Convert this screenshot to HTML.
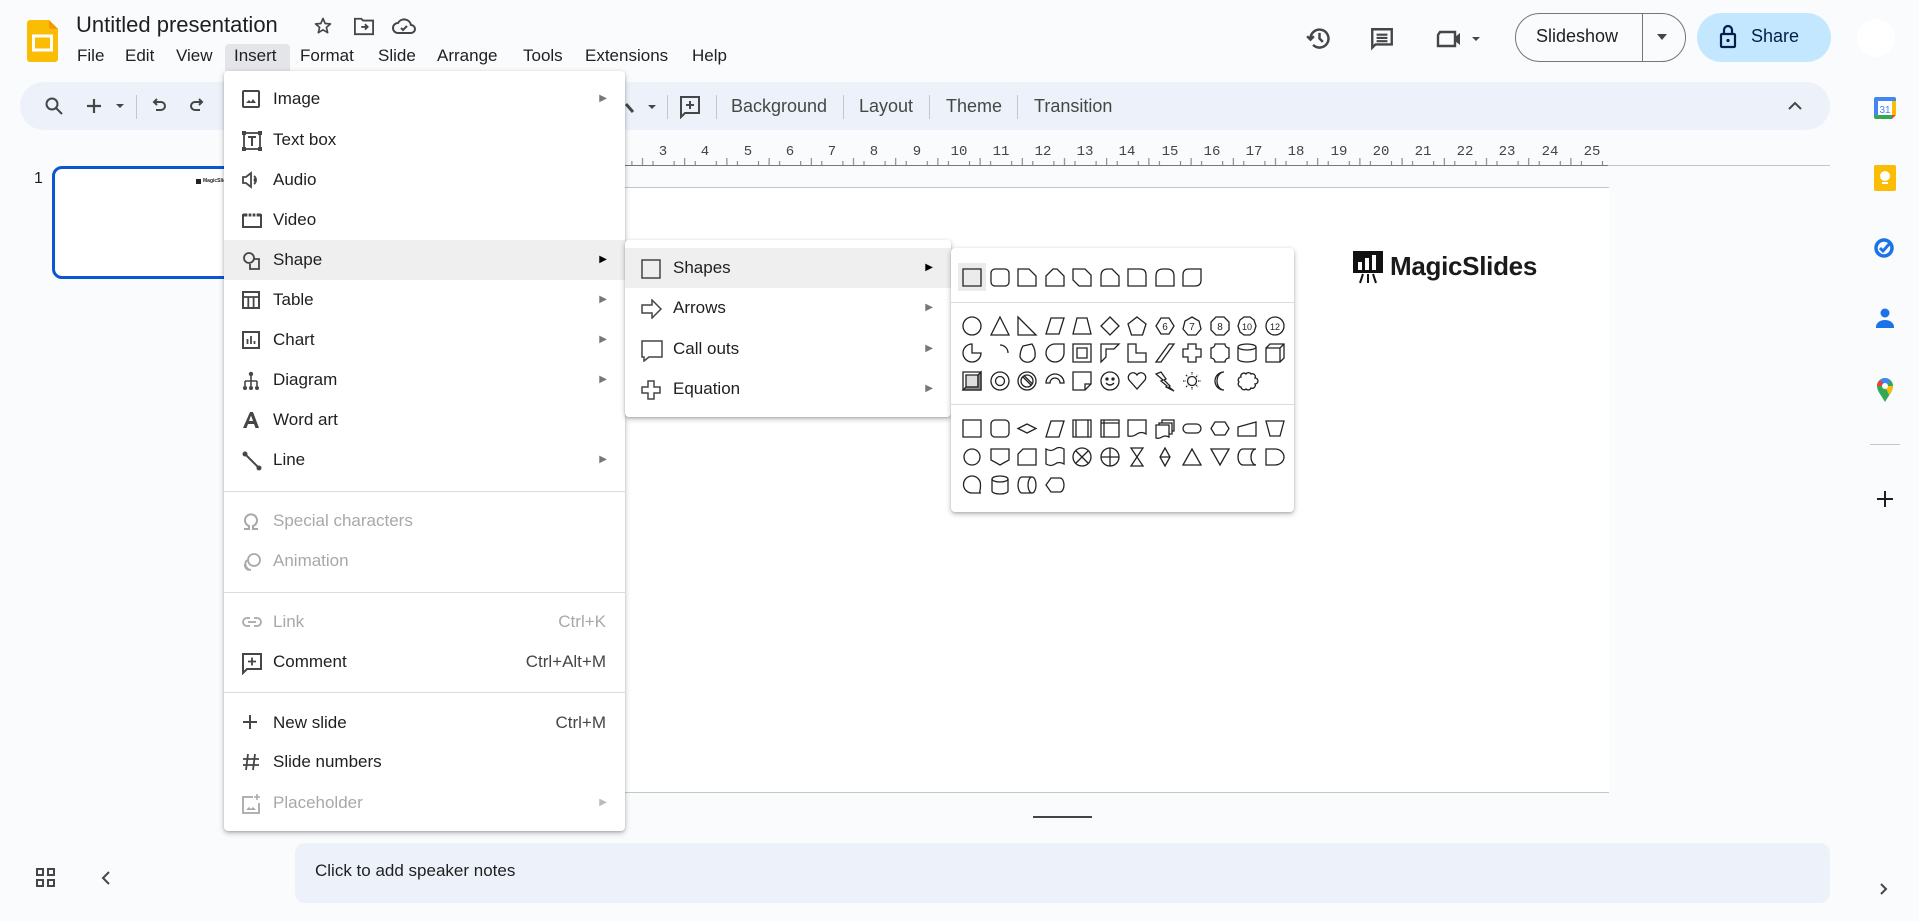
<!DOCTYPE html>
<html><head><meta charset="utf-8">
<style>
*{margin:0;padding:0;box-sizing:border-box}
body{width:1919px;height:921px;overflow:hidden;background:#f9fbfd;font-family:"Liberation Sans",Arial,sans-serif;color:#1f1f1f;position:relative}
.a{position:absolute}
.mb{position:absolute;top:46px;font-size:17px;color:#1f1f1f}
.tb{position:absolute;top:96px;font-size:18px;color:#444746}
.sep{position:absolute;top:95px;width:1px;height:24px;background:#c7c7c7}
.menu{position:absolute;background:#fff;border-radius:4px;box-shadow:0 2px 6px rgba(0,0,0,.25),0 1px 2px rgba(0,0,0,.15)}
.it{position:absolute;left:0;right:0;height:40px;font-size:17px;line-height:40px;color:#1f1f1f}
.it .t{position:absolute;left:49px}
.it svg{position:absolute;left:18px;top:11px}
.it .ar{position:absolute;right:18px;top:0;font-size:10px;color:#777}
.it .sc{position:absolute;right:19px;color:#444746}
.dis{color:#a8a8a8!important}
.dis .sc{color:#a8a8a8}
.hr{position:absolute;left:0;right:0;height:1px;background:#dadce0}
.rn{position:absolute;top:144px;font-size:14px;color:#444;font-family:"Liberation Mono",monospace;transform:translateX(-50%)}
</style></head><body>

<!-- logo -->
<svg class="a" style="left:27px;top:20px" width="31" height="42" viewBox="0 0 31 42"><path d="M3 0h19l9 9v30a3 3 0 0 1-3 3H3a3 3 0 0 1-3-3V3a3 3 0 0 1 3-3z" fill="#fbbc04"/><path d="M22 0l9 9h-7a2 2 0 0 1-2-2z" fill="#f29900"/><rect x="6.5" y="16" width="18" height="14" fill="none" stroke="#fff" stroke-width="3"/></svg>
<div class="a" style="left:76px;top:12px;font-size:22px;color:#1f1f1f">Untitled presentation</div>
<svg class="a" style="left:313px;top:16px" width="20" height="20" viewBox="0 0 24 24"><path d="M12 3l2.6 6 6.4.5-4.9 4.2 1.5 6.3L12 16.6 6.4 20l1.5-6.3L3 9.5 9.4 9z" fill="none" stroke="#444746" stroke-width="2" stroke-linejoin="round"/></svg>
<svg class="a" style="left:353px;top:16px" width="22" height="20" viewBox="0 0 24 22"><path d="M2 3h7l2 2h11v15H2z" fill="none" stroke="#444746" stroke-width="2"/><path d="M9 12h7M13 9l3 3-3 3" fill="none" stroke="#444746" stroke-width="2"/></svg>
<svg class="a" style="left:392px;top:16px" width="24" height="20" viewBox="0 0 24 20"><path d="M6 17a5 5 0 0 1 0-10 7 7 0 0 1 13 2 4 4 0 0 1 0 8z" fill="none" stroke="#444746" stroke-width="2"/><path d="M9 12l2 2 4-4" fill="none" stroke="#444746" stroke-width="2"/></svg>

<div class="a" style="left:225px;top:44px;width:65px;height:27px;background:#e3e5e8;border-radius:4px 4px 0 0"></div>
<div class="mb" style="left:77px">File</div><div class="mb" style="left:125px">Edit</div><div class="mb" style="left:176px">View</div><div class="mb" style="left:234px">Insert</div><div class="mb" style="left:300px">Format</div><div class="mb" style="left:378px">Slide</div><div class="mb" style="left:437px">Arrange</div><div class="mb" style="left:523px">Tools</div><div class="mb" style="left:585px">Extensions</div><div class="mb" style="left:692px">Help</div>

<!-- top right -->
<svg class="a" style="left:1306px;top:25px" width="27" height="27" viewBox="0 0 24 24"><path d="M4 12a8 8 0 1 1 2.3 5.7" fill="none" stroke="#444746" stroke-width="2.2"/><path d="M1 10l3 3 3-3" fill="none" stroke="#444746" stroke-width="2.2"/><path d="M12 7v5l3 3" fill="none" stroke="#444746" stroke-width="2.2"/></svg>
<svg class="a" style="left:1369px;top:26px" width="26" height="26" viewBox="0 0 24 24"><path d="M3 3h18v14H6l-3 3z" fill="none" stroke="#444746" stroke-width="2.2"/><path d="M7 8h10M7 11h10M7 14h10" stroke="#444746" stroke-width="2"/></svg>
<svg class="a" style="left:1436px;top:27px" width="46" height="24" viewBox="0 0 46 24"><path d="M4 5h15v14H2V8z" fill="none" stroke="#444746" stroke-width="2.4"/><path d="M19 10l5-4v12l-5-4z" fill="#444746"/><path d="M36 10h8l-4 4z" fill="#444746"/></svg>
<div class="a" style="left:1515px;top:13px;width:171px;height:49px;border:1px solid #747775;border-radius:25px"></div>
<div class="a" style="left:1642px;top:13px;width:1px;height:49px;background:#747775"></div>
<div class="a" style="left:1536px;top:26px;font-size:18px;color:#1f1f1f">Slideshow</div>
<svg class="a" style="left:1656px;top:33px" width="12" height="8"><path d="M1 1h10L6 7z" fill="#444746"/></svg>
<div class="a" style="left:1697px;top:13px;width:134px;height:49px;background:#c2e7ff;border-radius:25px"></div>
<svg class="a" style="left:1719px;top:24px" width="18" height="25" viewBox="0 0 18 25"><rect x="2" y="10" width="14" height="13" rx="1" fill="none" stroke="#041e49" stroke-width="2.2"/><path d="M5 10V6a4 4 0 0 1 8 0v4" fill="none" stroke="#041e49" stroke-width="2.2"/><circle cx="9" cy="16.5" r="1.6" fill="#041e49"/></svg>
<div class="a" style="left:1751px;top:26px;font-size:18px;color:#041e49">Share</div>
<div class="a" style="left:1857px;top:19px;width:38px;height:38px;border-radius:50%;background:#fff"></div>

<!-- toolbar -->
<div class="a" style="left:20px;top:82px;width:1810px;height:48px;background:#edf2fa;border-radius:24px"></div>
<svg class="a" style="left:44px;top:96px" width="20" height="20" viewBox="0 0 20 20"><circle cx="8" cy="8" r="5.5" fill="none" stroke="#444746" stroke-width="2"/><path d="M12 12l6 6" stroke="#444746" stroke-width="2"/></svg>
<svg class="a" style="left:86px;top:97px" width="40" height="18" viewBox="0 0 40 18"><path d="M8 2v14M1 9h14" stroke="#444746" stroke-width="2.2"/><path d="M30 7h8l-4 4z" fill="#444746"/></svg>
<div class="sep" style="left:136px"></div>
<svg class="a" style="left:150px;top:97px" width="18" height="18" viewBox="0 0 18 18"><path d="M5 5h6a4 4 0 0 1 0 8H6" fill="none" stroke="#444746" stroke-width="2"/><path d="M7 2L4 5l3 3" fill="none" stroke="#444746" stroke-width="2"/></svg>
<svg class="a" style="left:188px;top:97px" width="18" height="18" viewBox="0 0 18 18"><path d="M13 5H7a4 4 0 0 0 0 8h5" fill="none" stroke="#444746" stroke-width="2"/><path d="M11 2l3 3-3 3" fill="none" stroke="#444746" stroke-width="2"/></svg>
<svg class="a" style="left:622px;top:98px" width="40" height="18" viewBox="0 0 40 18"><path d="M4 6l7 8" stroke="#444746" stroke-width="3"/><path d="M26 7h8l-4 4z" fill="#444746"/></svg>
<div class="sep" style="left:667px"></div>
<svg class="a" style="left:679px;top:95px" width="22" height="24" viewBox="0 0 22 24"><path d="M2 2h18v16H6l-4 4z" fill="none" stroke="#444746" stroke-width="2"/><path d="M11 6v8M7 10h8" stroke="#444746" stroke-width="2"/></svg>
<div class="sep" style="left:716px"></div>
<div class="tb" style="left:731px">Background</div><div class="sep" style="left:843px"></div>
<div class="tb" style="left:859px">Layout</div><div class="sep" style="left:929px"></div>
<div class="tb" style="left:946px">Theme</div><div class="sep" style="left:1017px"></div>
<div class="tb" style="left:1034px">Transition</div>
<svg class="a" style="left:1787px;top:100px" width="16" height="12"><path d="M2 9l6-6 6 6" fill="none" stroke="#444746" stroke-width="2"/></svg>

<!-- ruler -->
<svg class="a" style="left:0;top:150px" width="1919" height="20">
<defs><pattern id="rp" x="537" y="0" width="42.2" height="20" patternUnits="userSpaceOnUse"><path d="M10.5 11v4M21.1 8v7M31.6 11v4" stroke="#777" stroke-width="1"/></pattern></defs>
<rect x="625" y="0" width="983" height="15" fill="url(#rp)"/>
<path d="M625 15.5H1608" stroke="#777"/><path d="M1608 15.5H1830" stroke="#c4c7c5"/>
</svg>
<div class="rn" style="left:663px">3</div><div class="rn" style="left:705px">4</div><div class="rn" style="left:748px">5</div><div class="rn" style="left:790px">6</div><div class="rn" style="left:832px">7</div><div class="rn" style="left:874px">8</div><div class="rn" style="left:917px">9</div><div class="rn" style="left:959px">10</div><div class="rn" style="left:1001px">11</div><div class="rn" style="left:1043px">12</div><div class="rn" style="left:1085px">13</div><div class="rn" style="left:1127px">14</div><div class="rn" style="left:1170px">15</div><div class="rn" style="left:1212px">16</div><div class="rn" style="left:1254px">17</div><div class="rn" style="left:1296px">18</div><div class="rn" style="left:1339px">19</div><div class="rn" style="left:1381px">20</div><div class="rn" style="left:1423px">21</div><div class="rn" style="left:1465px">22</div><div class="rn" style="left:1507px">23</div><div class="rn" style="left:1550px">24</div><div class="rn" style="left:1592px">25</div>

<!-- slide -->
<div class="a" style="left:532px;top:187px;width:1077px;height:606px;background:#fff;border-top:1px solid #c4c7c5;border-bottom:1px solid #c4c7c5"></div>
<svg class="a" style="left:1352px;top:250px" width="32" height="34" viewBox="0 0 32 34"><rect x="1" y="1" width="30" height="22" fill="#111"/><rect x="6" y="12" width="4" height="8" fill="#fff"/><rect x="13" y="8" width="4" height="12" fill="#fff"/><rect x="20" y="5" width="4" height="15" fill="#fff"/><path d="M11 24l-3 9M16 24v9M21 24l3 9" stroke="#111" stroke-width="2"/></svg>
<div class="a" style="left:1390px;top:251px;font-size:26px;font-weight:bold;color:#1a1a1a;letter-spacing:-0.3px">MagicSlides</div>
<div class="a" style="left:1033px;top:816px;width:59px;height:2px;background:#444"></div>

<!-- thumbnail -->
<div class="a" style="left:34px;top:170px;font-size:16px;color:#1f1f1f">1</div>
<div class="a" style="left:52px;top:166px;width:186px;height:113px;border:3px solid #0b57d0;border-radius:10px;background:#fff"></div>
<div class="a" style="left:196px;top:179px;width:5px;height:5px;background:#222"></div>
<div class="a" style="left:203px;top:178px;font-size:5px;font-weight:bold">MagicSlides</div>

<!-- notes -->
<div class="a" style="left:295px;top:843px;width:1535px;height:60px;background:#edf2fa;border-radius:10px"></div>
<div class="a" style="left:315px;top:861px;font-size:17px;color:#1f1f1f">Click to add speaker notes</div>
<svg class="a" style="left:36px;top:868px" width="19" height="19" viewBox="0 0 19 19"><g fill="none" stroke="#444746" stroke-width="2"><rect x="1" y="1" width="6" height="6"/><rect x="12" y="1" width="6" height="6"/><rect x="1" y="12" width="6" height="6"/><rect x="12" y="12" width="6" height="6"/></g></svg>
<svg class="a" style="left:100px;top:870px" width="12" height="16"><path d="M9 2L3 8l6 6" fill="none" stroke="#444746" stroke-width="2"/></svg>

<!-- right side panel -->
<svg class="a" style="left:1873px;top:96px" width="24" height="24" viewBox="0 0 24 24"><rect x="1" y="1" width="22" height="22" rx="2" fill="#fff"/><path d="M1 3a2 2 0 0 1 2-2h18a2 2 0 0 1 2 2v2H1z" fill="#4285f4"/><path d="M1 19h18v4H3a2 2 0 0 1-2-2z" fill="#34a853"/><path d="M19 5h4v14h-4z" fill="#fbbc04"/><path d="M19 19h4l-4 4z" fill="#ea4335"/><path d="M1 5h4v14H1z" fill="#4285f4"/><text x="12" y="17" font-size="10" text-anchor="middle" fill="#4285f4" font-family="Liberation Sans">31</text></svg>
<svg class="a" style="left:1874px;top:165px" width="22" height="26" viewBox="0 0 22 26"><rect x="0" y="0" width="22" height="26" rx="2" fill="#fbbc04"/><circle cx="11" cy="11" r="5" fill="#fff"/><rect x="8" y="17" width="6" height="2" fill="#fff"/></svg>
<svg class="a" style="left:1873px;top:235px" width="24" height="24" viewBox="0 0 24 24"><circle cx="11" cy="13" r="8" fill="none" stroke="#1a73e8" stroke-width="3.5"/><path d="M7 13l3 3 8-9" fill="none" stroke="#1a73e8" stroke-width="3"/></svg>
<svg class="a" style="left:1876px;top:307px" width="18" height="22" viewBox="0 0 18 22"><circle cx="9" cy="6" r="4.5" fill="#1a73e8"/><path d="M0 20a9 7 0 0 1 18 0v1H0z" fill="#1a73e8"/></svg>
<svg class="a" style="left:1876px;top:377px" width="18" height="26" viewBox="0 0 18 26"><path d="M9 25C5 18 1 14 1 9a8 8 0 0 1 16 0c0 5-4 9-8 16z" fill="#34a853"/><path d="M1 9a8 8 0 0 1 3-6l5 6z" fill="#ea4335"/><path d="M4 3a8 8 0 0 1 11 1L9 9z" fill="#4285f4"/><path d="M17 9c0 3-2 6-4 9L9 9z" fill="#fbbc04"/><circle cx="9" cy="9" r="3" fill="#fff"/></svg>
<div class="a" style="left:1870px;top:444px;width:30px;height:1px;background:#c4c7c5"></div>
<svg class="a" style="left:1877px;top:491px" width="16" height="16"><path d="M8 0v16M0 8h16" stroke="#1f1f1f" stroke-width="2"/></svg>
<svg class="a" style="left:1879px;top:882px" width="10" height="14"><path d="M2 2l5 5-5 5" fill="none" stroke="#444746" stroke-width="2"/></svg>

<!-- Insert menu -->
<div class="menu" style="left:224px;top:71px;width:401px;height:760px">
<div class="a" style="left:0;right:0;top:169px;height:40px;background:#efefef"></div>
<div class="it" style="top:8px"><svg width="18" height="18" viewBox="0 0 18 18"><rect x="1" y="1" width="16" height="16" rx="1" fill="none" stroke="#444746" stroke-width="2"/><path d="M4 13l3-3 2 2 2-3 3 4z" fill="#444746"/></svg><span class="t">Image</span><span class="ar">▶</span></div>
<div class="it" style="top:49px"><svg width="20" height="20" viewBox="0 0 20 20"><rect x="2" y="2" width="16" height="16" fill="none" stroke="#444746" stroke-width="1.8"/><path d="M6 6h8M10 6v9" stroke="#444746" stroke-width="2"/><g fill="#444746"><rect x="0" y="0" width="4" height="4"/><rect x="16" y="0" width="4" height="4"/><rect x="0" y="16" width="4" height="4"/><rect x="16" y="16" width="4" height="4"/></g></svg><span class="t">Text box</span></div>
<div class="it" style="top:89px"><svg width="18" height="18" viewBox="0 0 18 18"><path d="M1 6h3l5-4v14l-5-4H1z" fill="none" stroke="#444746" stroke-width="1.8"/><path d="M12 5a5 5 0 0 1 0 8M12 7.5a2 2 0 0 1 0 3" fill="none" stroke="#444746" stroke-width="1.8"/></svg><span class="t">Audio</span></div>
<div class="it" style="top:129px"><svg width="20" height="18" viewBox="0 0 20 18"><rect x="1" y="4" width="18" height="12" fill="none" stroke="#444746" stroke-width="2"/><path d="M1 4h18" stroke="#444746" stroke-width="3"/><path d="M6 2v4M10 2v4M14 2v4" stroke="#fff" stroke-width="1.2"/></svg><span class="t">Video</span></div>
<div class="it" style="top:169px"><svg width="20" height="20" viewBox="0 0 20 20"><circle cx="7" cy="7" r="5" fill="none" stroke="#444746" stroke-width="1.8"/><path d="M12 8h5v10H8v-5" fill="none" stroke="#444746" stroke-width="1.8"/></svg><span class="t">Shape</span><span class="ar" style="color:#000">▶</span></div>
<div class="it" style="top:209px"><svg width="18" height="18" viewBox="0 0 18 18"><rect x="1" y="1" width="16" height="16" fill="none" stroke="#444746" stroke-width="2"/><path d="M1 6h16M6.3 6v11M11.6 6v11" stroke="#444746" stroke-width="1.8"/></svg><span class="t">Table</span><span class="ar">▶</span></div>
<div class="it" style="top:249px"><svg width="18" height="18" viewBox="0 0 18 18"><rect x="1" y="1" width="16" height="16" fill="none" stroke="#444746" stroke-width="2"/><path d="M5.5 8v5M9 5v8M12.5 10v3" stroke="#444746" stroke-width="1.8"/></svg><span class="t">Chart</span><span class="ar">▶</span></div>
<div class="it" style="top:289px"><svg width="18" height="20" viewBox="0 0 18 20"><circle cx="9" cy="3" r="2.2" fill="#444746"/><path d="M9 5v5M3 10h12M3 10v5M9 10v5M15 10v5" stroke="#444746" stroke-width="1.6"/><circle cx="3" cy="17" r="2" fill="#444746"/><circle cx="9" cy="17" r="2" fill="#444746"/><circle cx="15" cy="17" r="2" fill="#444746"/></svg><span class="t">Diagram</span><span class="ar">▶</span></div>
<div class="it" style="top:329px"><svg width="18" height="18" viewBox="0 0 18 18"><path d="M1 17L8 1h3l6 16h-3.5l-1.5-4H6l-1.5 4z M7 10h4L9 4.5z" fill="#444746" fill-rule="evenodd"/></svg><span class="t">Word art</span></div>
<div class="it" style="top:369px"><svg width="20" height="20" viewBox="0 0 20 20"><path d="M3 3l14 14" stroke="#444746" stroke-width="2"/><circle cx="3" cy="3" r="2.5" fill="#444746"/><circle cx="17" cy="17" r="2.5" fill="#444746"/></svg><span class="t">Line</span><span class="ar">▶</span></div>
<div class="hr" style="top:420px"></div>
<div class="it dis" style="top:430px"><svg width="18" height="18" viewBox="0 0 18 18"><path d="M2 17h5v-3a6 6 0 1 1 4 0v3h5" fill="none" stroke="#a8a8a8" stroke-width="2"/></svg><span class="t">Special characters</span></div>
<div class="it dis" style="top:470px"><svg width="20" height="20" viewBox="0 0 20 20"><circle cx="12" cy="8" r="6" fill="none" stroke="#a8a8a8" stroke-width="1.8"/><path d="M5 8a6 6 0 0 0 4 10M3 12a5 5 0 0 0 4 6" fill="none" stroke="#a8a8a8" stroke-width="1.8"/></svg><span class="t">Animation</span></div>
<div class="hr" style="top:521px"></div>
<div class="it dis" style="top:531px"><svg width="20" height="18" viewBox="0 0 20 18"><path d="M8 5H5a4 4 0 0 0 0 8h3M12 5h3a4 4 0 0 1 0 8h-3M6 9h8" fill="none" stroke="#a8a8a8" stroke-width="1.8"/></svg><span class="t">Link</span><span class="sc">Ctrl+K</span></div>
<div class="it" style="top:571px"><svg width="20" height="22" viewBox="0 0 20 22"><path d="M1 1h18v15H5l-4 4z" fill="none" stroke="#444746" stroke-width="2"/><path d="M10 4.5v8M6 8.5h8" stroke="#444746" stroke-width="1.8"/></svg><span class="t">Comment</span><span class="sc">Ctrl+Alt+M</span></div>
<div class="hr" style="top:621px"></div>
<div class="it" style="top:632px"><svg width="16" height="16"><path d="M8 1v14M1 8h14" stroke="#444746" stroke-width="2"/></svg><span class="t">New slide</span><span class="sc">Ctrl+M</span></div>
<div class="it" style="top:671px"><svg width="18" height="18" viewBox="0 0 18 18"><path d="M6 1L4 17M13 1l-2 16M1 6h16M1 12h16" stroke="#444746" stroke-width="1.8"/></svg><span class="t">Slide numbers</span></div>
<div class="it dis" style="top:712px"><svg width="18" height="20" viewBox="0 0 18 20"><path d="M11 3H1v16h16V9" fill="none" stroke="#a8a8a8" stroke-width="1.8"/><path d="M4 16l3-3 2 2 2-2 3 3z" fill="#a8a8a8"/><path d="M15 0v6M12 3h6" stroke="#a8a8a8" stroke-width="1.5"/></svg><span class="t">Placeholder</span><span class="ar" style="color:#bbb">▶</span></div>
</div>

<!-- Shape submenu -->
<div class="menu" style="left:625px;top:240px;width:326px;height:177px">
<div class="a" style="left:0;right:0;top:8px;height:40px;background:#efefef"></div>
<div class="it" style="top:8px"><svg style="left:16px" width="20" height="20" viewBox="0 0 20 20"><rect x="1" y="1" width="18" height="18" fill="none" stroke="#444746" stroke-width="1.5"/></svg><span class="t" style="left:48px">Shapes</span><span class="ar" style="color:#000">▶</span></div>
<div class="it" style="top:48px"><svg style="left:16px" width="22" height="20" viewBox="0 0 22 20"><path d="M1 6h10V1l9 9-9 9v-5H1z" fill="none" stroke="#444746" stroke-width="1.5"/></svg><span class="t" style="left:48px">Arrows</span><span class="ar">▶</span></div>
<div class="it" style="top:89px"><svg style="left:16px" width="22" height="22" viewBox="0 0 22 22"><path d="M1 1h20v16H8l-5 4v-4H1z" fill="none" stroke="#444746" stroke-width="1.5"/></svg><span class="t" style="left:48px">Call outs</span><span class="ar">▶</span></div>
<div class="it" style="top:129px"><svg style="left:16px" width="20" height="20" viewBox="0 0 20 20"><path d="M7 1h6v6h6v6h-6v6H7v-6H1V7h6z" fill="none" stroke="#444746" stroke-width="1.5"/></svg><span class="t" style="left:48px">Equation</span><span class="ar">▶</span></div>
</div>

<!-- Shapes palette -->
<div class="menu" style="left:951px;top:248px;width:343px;height:264px"></div>
<div class="a" style="left:958px;top:263px;width:28px;height:28px;background:#ebebeb"></div>
<div class="a" style="left:951px;top:302px;width:343px;height:1px;background:#dadce0"></div>
<div class="a" style="left:951px;top:404px;width:343px;height:1px;background:#dadce0"></div>
<svg class="a" style="left:951px;top:248px" width="343" height="264" viewBox="951 248 343 264" fill="none" stroke="#222" stroke-width="1.3" font-family="Liberation Sans">
<!-- row1 y 277 -->
<g transform="translate(962,268)"><path d="M1 1h18v17H1z"/></g>
<g transform="translate(990,268)"><rect x="1" y="1" width="18" height="17" rx="4"/></g>
<g transform="translate(1017,268)"><path d="M1 1h11l7 7v10H1z"/></g>
<g transform="translate(1045,268)"><path d="M1 8l7-7h4l7 7v10H1z"/></g>
<g transform="translate(1072,268)"><path d="M1 1h12l6 6v11H7l-6-6z"/></g>
<g transform="translate(1100,268)"><path d="M1 8q0-7 7-7h4l7 7v10H1z"/></g>
<g transform="translate(1127,268)"><path d="M1 1h12q6 0 6 6v11H1z"/></g>
<g transform="translate(1155,268)"><path d="M1 8q0-7 7-7h4q7 0 7 7v10H1z"/></g>
<g transform="translate(1182,268)"><path d="M7 1h12v11q0 6-6 6H1V7q0-6 6-6z"/></g>
<!-- row2 y 326 -->
<g transform="translate(962,316)"><circle cx="10" cy="10" r="9"/></g>
<g transform="translate(990,316)"><path d="M10 1l9 18H1z"/></g>
<g transform="translate(1017,316)"><path d="M1 1l18 18H1z"/></g>
<g transform="translate(1045,316)"><path d="M6 2h13l-5 16H1z"/></g>
<g transform="translate(1072,316)"><path d="M5 2h10l4 16H1z"/></g>
<g transform="translate(1100,316)"><path d="M10 1l9 9-9 9-9-9z"/></g>
<g transform="translate(1127,316)"><path d="M10 1l9 7-3.5 11h-11L1 8z"/></g>
<g transform="translate(1155,316)"><path d="M6 2h8l5 8-5 8H6l-5-8z"/><text x="10" y="14" font-size="10" text-anchor="middle" fill="#222" stroke="none">6</text></g>
<g transform="translate(1182,316)"><path d="M10 1l7 4 2 8-5 6H6l-5-6 2-8z"/><text x="10" y="14" font-size="10" text-anchor="middle" fill="#222" stroke="none">7</text></g>
<g transform="translate(1210,316)"><path d="M6 1h8l5 5v8l-5 5H6l-5-5V6z"/><text x="10" y="14" font-size="10" text-anchor="middle" fill="#222" stroke="none">8</text></g>
<g transform="translate(1237,316)"><path d="M7 1h6l4 3 2 6-2 6-4 3H7l-4-3-2-6 2-6z"/><text x="10" y="14" font-size="9" text-anchor="middle" fill="#222" stroke="none">10</text></g>
<g transform="translate(1265,316)"><circle cx="10" cy="10" r="9"/><text x="10" y="14" font-size="9" text-anchor="middle" fill="#222" stroke="none">12</text></g>
<!-- row3 y 353 -->
<g transform="translate(962,343)"><path d="M10 10h9a9 9 0 1 1-9-9z"/></g>
<g transform="translate(990,343)"><path d="M10 2a8 8 0 0 1 8 8"/></g>
<g transform="translate(1017,343)"><path d="M6 3l9-2q4 6 3 13a8 8 0 0 1-15 0q0-6 3-11z"/></g>
<g transform="translate(1045,343)"><path d="M10 1h9v9a9 9 0 1 1-9-9z"/></g>
<g transform="translate(1072,343)"><path d="M1 1h18v18H1z M5 5h10v10H5z"/></g>
<g transform="translate(1100,343)"><path d="M1 1h18l-5 5H6v8l-5 5z"/></g>
<g transform="translate(1127,343)"><path d="M1 1h8v9h10v9H1z"/></g>
<g transform="translate(1155,343)"><path d="M14 1h5L6 19H1z"/></g>
<g transform="translate(1182,343)"><path d="M6 1h8v5h5v8h-5v5H6v-5H1V6h5z"/></g>
<g transform="translate(1210,343)"><path d="M5 1h10a4 4 0 0 0 4 4v10a4 4 0 0 0-4 4H5a4 4 0 0 0-4-4V5a4 4 0 0 0 4-4z"/></g>
<g transform="translate(1237,343)"><path d="M1 4v12a9 3 0 0 0 18 0V4"/><ellipse cx="10" cy="4" rx="9" ry="3"/></g>
<g transform="translate(1265,343)"><path d="M1 5h14v14H1z M1 5l4-4h14v14l-4 4 M15 5l4-4"/></g>
<!-- row4 y 381 -->
<g transform="translate(962,371)"><path d="M1 1h18v18H1z"/><path d="M4 4h12v12H4z" fill="#ddd"/><path d="M16 4v12H4l-3 3h18V1z" fill="#888"/></g>
<g transform="translate(990,371)"><circle cx="10" cy="10" r="9"/><circle cx="10" cy="10" r="4.5"/></g>
<g transform="translate(1017,371)"><circle cx="10" cy="10" r="9"/><circle cx="10" cy="10" r="6"/><path d="M6 6l8 8M7.5 5l7.5 7.5"/></g>
<g transform="translate(1045,371)"><path d="M1 12a9 9 0 0 1 18 0h-4a5 5 0 0 0-10 0z"/></g>
<g transform="translate(1072,371)"><path d="M1 1h18v12l-6 6H1z M13 19v-6h6"/></g>
<g transform="translate(1100,371)"><circle cx="10" cy="10" r="9"/><circle cx="7" cy="8" r="1" fill="#222"/><circle cx="13" cy="8" r="1" fill="#222"/><path d="M6 12q4 4 8 0"/></g>
<g transform="translate(1127,371)"><path d="M10 18L2 9a4.5 4.5 0 0 1 8-5 4.5 4.5 0 0 1 8 5z"/></g>
<g transform="translate(1155,371)"><path d="M1 3l5-2 5 7-2 1 6 6-1 1 5 4-8-4 1-1-6-5 2-1z"/></g>
<g transform="translate(1182,371)"><circle cx="10" cy="10" r="4.5"/><path d="M10 1v3M10 16v3M1 10h3M16 10h3M4 4l2 2M14 14l2 2M4 16l2-2M14 6l2-2" stroke-dasharray="1.5 1"/></g>
<g transform="translate(1210,371)"><path d="M14 1a9 9 0 0 0 0 18 7 9 0 0 1 0-18z"/></g>
<g transform="translate(1237,371)"><path d="M4 6a3 3 0 0 1 5-3 3 3 0 0 1 5 0 3 3 0 0 1 4 4 3 3 0 0 1 0 6 3 3 0 0 1-4 4 3 3 0 0 1-5 1 3 3 0 0 1-5-2 3 3 0 0 1-2-5 3 3 0 0 1 2-5z"/></g>
<!-- row5 y 428 -->
<g transform="translate(962,419)"><path d="M1 1h18v17H1z"/></g>
<g transform="translate(990,419)"><rect x="1" y="1" width="18" height="17" rx="4"/></g>
<g transform="translate(1017,419)"><path d="M1 9.5L10 5l9 4.5-9 4.5z"/></g>
<g transform="translate(1045,419)"><path d="M6 2h13l-5 16H1z"/></g>
<g transform="translate(1072,419)"><path d="M1 1h18v17H1z M4 1v17M16 1v17"/></g>
<g transform="translate(1100,419)"><path d="M1 1h18v17H1z M4 1v17M1 4h18"/></g>
<g transform="translate(1127,419)"><path d="M1 1h18v14q-5-3-9 0t-9 2z"/></g>
<g transform="translate(1155,419)"><path d="M1 6h13v12q-4-2-7 0t-6 1z M4 6V4h13v11h-3 M7 4V1h12v11h-2"/></g>
<g transform="translate(1182,419)"><rect x="1" y="5" width="18" height="9" rx="4.5"/></g>
<g transform="translate(1210,419)"><path d="M5 3h10l4 6.5-4 6.5H5l-4-6.5z"/></g>
<g transform="translate(1237,419)"><path d="M1 8l18-5v14H1z"/></g>
<g transform="translate(1265,419)"><path d="M1 2h18l-4 15H5z"/></g>
<!-- row6 y 457 -->
<g transform="translate(962,447)"><circle cx="10" cy="10" r="8"/></g>
<g transform="translate(990,447)"><path d="M1 2h18v11l-9 5-9-5z"/></g>
<g transform="translate(1017,447)"><path d="M6 2h13v16H1V7z"/></g>
<g transform="translate(1045,447)"><path d="M1 2q5 3 9 0t9 0v15q-5-3-9 0t-9 0z"/></g>
<g transform="translate(1072,447)"><circle cx="10" cy="10" r="9"/><path d="M4 4l12 12M16 4L4 16"/></g>
<g transform="translate(1100,447)"><circle cx="10" cy="10" r="9"/><path d="M10 1v18M1 10h18"/></g>
<g transform="translate(1127,447)"><path d="M4 1h12L4 19h12z"/></g>
<g transform="translate(1155,447)"><path d="M10 1l5 9-5 9-5-9z M5 10h10"/></g>
<g transform="translate(1182,447)"><path d="M10 2l9 16H1z"/></g>
<g transform="translate(1210,447)"><path d="M1 2h18l-9 16z"/></g>
<g transform="translate(1237,447)"><path d="M6 2h13a5 8 0 0 0 0 16H6a5 8 0 0 1 0-16z"/></g>
<g transform="translate(1265,447)"><path d="M1 2h9a9 8 0 0 1 0 16H1z"/></g>
<!-- row7 y 485 -->
<g transform="translate(962,475)"><path d="M19 18h-9a8.5 8.5 0 1 1 8.5-8.5q0 5-1 8.5z"/></g>
<g transform="translate(990,475)"><path d="M2 4v12a8 3 0 0 0 16 0V4"/><ellipse cx="10" cy="4" rx="8" ry="3"/></g>
<g transform="translate(1017,475)"><path d="M5 2h10a4 8 0 0 1 0 16H5a4 8 0 0 1 0-16z M15 2a4 8 0 0 0 0 16"/></g>
<g transform="translate(1045,475)"><path d="M1 10l5-7h9a4 7 0 0 1 0 14H6z"/></g>
</svg>
</body></html>
